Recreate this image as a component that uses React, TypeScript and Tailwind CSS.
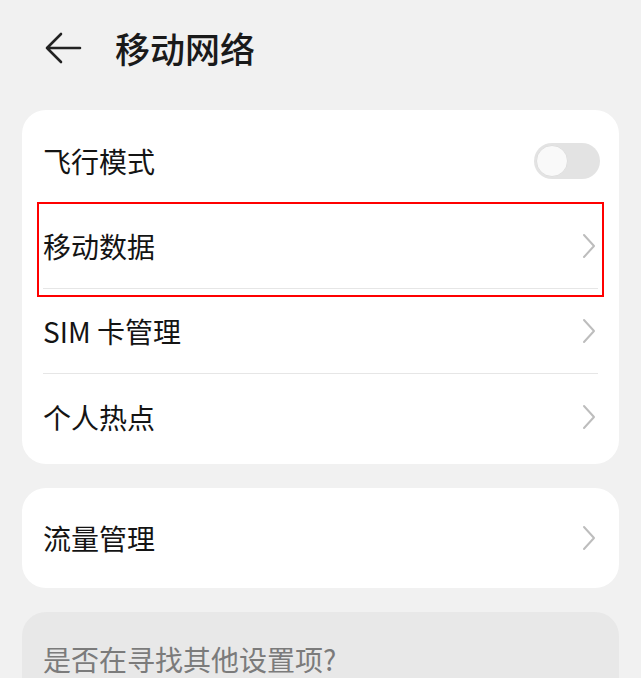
import React from "react";

const font = { fontFamily: '"Noto Sans CJK SC", "Noto Sans", sans-serif' };

function Chevron() {
  return (
    <svg width="14" height="26" viewBox="0 0 14 26" fill="none" className="mr-[2px]">
      <polyline
        points="2,2 12,13 2,24"
        stroke="#bdbdbd"
        strokeWidth="2"
        strokeLinecap="round"
        strokeLinejoin="round"
      />
    </svg>
  );
}

function Toggle() {
  return (
    <div className="-mr-[2px] flex h-[36px] w-[66px] items-center rounded-full bg-[#e3e3e3] p-[2px]">
      <div className="h-[32px] w-[32px] rounded-full border border-[#dedede] bg-[#f9f9f9]" />
    </div>
  );
}

function Row({
  label,
  right,
  divider = true,
  children,
}: {
  label: string;
  right: React.ReactNode;
  divider?: boolean;
  children?: React.ReactNode;
}) {
  return (
    <div className="relative px-[21px]">
      <div
        className={
          "flex h-[85px] items-center justify-between " +
          (divider ? "border-b border-[#e6e6e6]" : "")
        }
      >
        <span className="text-[28px] text-[#141414]">{label}</span>
        {right}
      </div>
      {children}
    </div>
  );
}

export default function App() {
  return (
    <div className="h-[678px] w-[641px] overflow-hidden bg-[#f1f1f1]" style={font}>
      {/* Header */}
      <div className="flex h-[96px] items-center pl-[44px]">
        <svg width="38" height="34" viewBox="0 0 38 34" fill="none">
          <path
            d="M36 17H3M17 3L3 17l14 14"
            stroke="#222"
            strokeWidth="2.6"
            strokeLinecap="round"
            strokeLinejoin="round"
          />
        </svg>
        <h1 className="ml-[33px] text-[35px] font-medium text-[#1a1a1a]">移动网络</h1>
      </div>

      <div className="flex flex-col gap-[24px] px-[22px] pt-[14px]">
        {/* Main card */}
        <div className="rounded-[24px] bg-white pb-[5px] pt-[9px]">
          <Row label="飞行模式" right={<Toggle />} />
          <Row label="移动数据" right={<Chevron />}>
            <div className="pointer-events-none absolute left-[15px] top-[-2px] h-[95px] w-[567px] border-[2.5px] border-[#ff0000]" />
          </Row>
          <Row label="SIM 卡管理" right={<Chevron />} />
          <Row label="个人热点" right={<Chevron />} divider={false} />
        </div>

        {/* Data usage */}
        <div className="flex h-[100px] items-center rounded-[24px] bg-white">
          <div className="w-full">
            <Row label="流量管理" right={<Chevron />} divider={false} />
          </div>
        </div>

        {/* Suggestions */}
        <div className="h-[120px] rounded-[24px] bg-[#e8e8e8] px-[21px] pt-[26px]">
          <span className="text-[28px] text-[#7b7b7b]">是否在寻找其他设置项?</span>
        </div>
      </div>
    </div>
  );
}
